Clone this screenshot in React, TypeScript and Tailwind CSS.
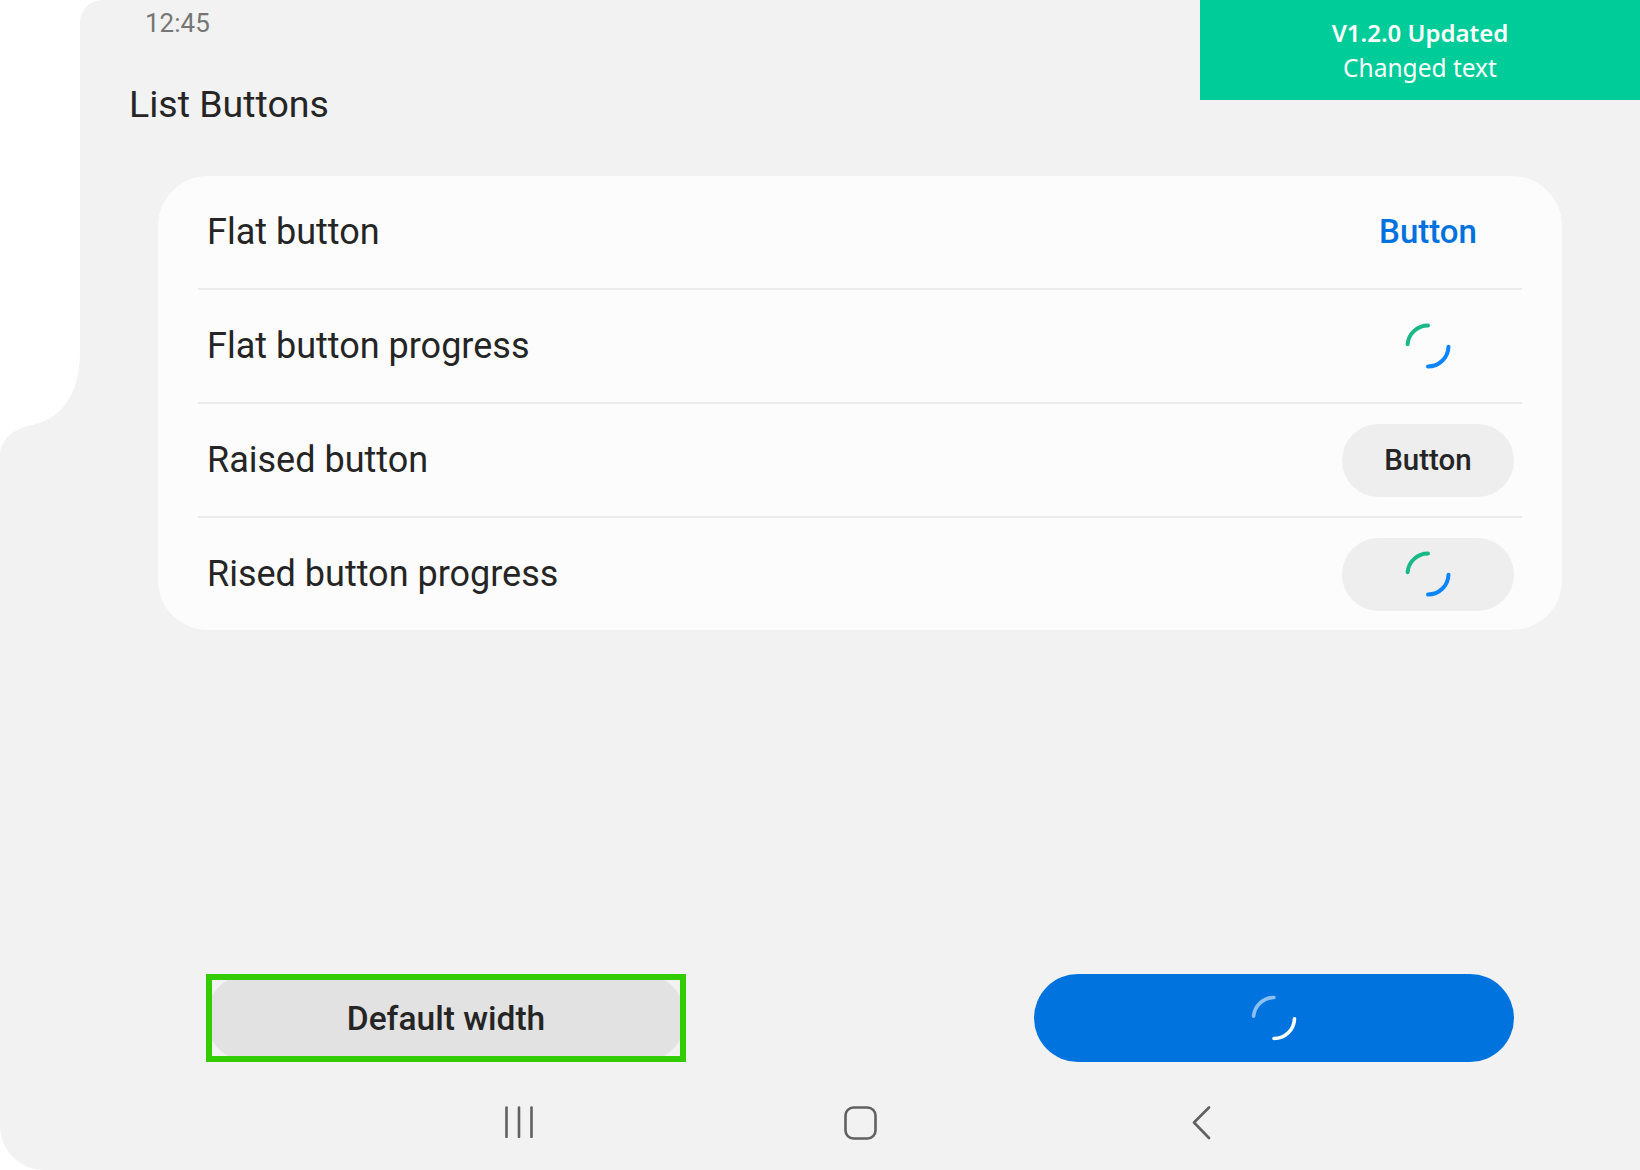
import React from "react";

function Spinner({ light = false }: { light?: boolean }) {
  const first = light ? "#ffffff" : "#19b888";
  const second = light ? "#ffffff" : "#0a84ff";
  return (
    <svg width="48" height="48" viewBox="0 0 48 48" fill="none">
      <path
        d="M3.6 22.2 A20.5 20.5 0 0 1 24 3.5"
        stroke={first}
        strokeOpacity={light ? 0.55 : 1}
        strokeWidth={light ? 3.6 : 4}
        strokeLinecap="round"
      />
      <path
        d="M44.5 24.7 A20.5 20.5 0 0 1 24 44.5"
        stroke={second}
        strokeWidth={light ? 3.6 : 4}
        strokeLinecap="round"
      />
    </svg>
  );
}

function Row({ label, children, last = false }: { label: string; children: React.ReactNode; last?: boolean }) {
  return (
    <div className={`mx-[40px] ${last ? "" : "border-b-2 border-[#ebebeb]"}`}>
      <div className="flex h-[112px] items-center justify-between pl-[9px] pr-[8px]">
        <span className="text-[36px] text-[#252525]">{label}</span>
        <div className="flex w-[172px] justify-center">{children}</div>
      </div>
    </div>
  );
}

export default function App() {
  return (
    <div
      className="relative h-[1170px] w-[1640px] overflow-hidden bg-white"
      style={{ fontFamily: "Roboto, 'Liberation Sans', sans-serif" }}
    >
      <div className="flex h-full flex-col rounded-bl-[44px] bg-[#f2f2f2]">
        {/* status bar */}
        <div className="flex h-[46px] items-center pl-[145px] text-[26px] text-[#767676]">12:45</div>

        {/* title */}
        <div className="flex h-[116px] items-center pl-[129px] text-[37.5px] text-[#252525]">List Buttons</div>

        {/* card */}
        <div className="ml-[158px] mt-[14px] w-[1404px] rounded-[50px] bg-[#fcfcfc]">
          <Row label="Flat button">
            <span className="text-[33px] font-medium text-[#0072de]">Button</span>
          </Row>
          <Row label="Flat button progress">
            <Spinner />
          </Row>
          <Row label="Raised button">
            <button className="flex h-[73px] w-[172px] items-center justify-center rounded-full bg-[#eeeeee] text-[29.5px] font-medium text-[#252525]">
              Button
            </button>
          </Row>
          <Row label="Rised button progress" last>
            <div className="flex h-[73px] w-[172px] items-center justify-center rounded-full bg-[#eeeeee]">
              <Spinner />
            </div>
          </Row>
        </div>

        <div className="flex-1" />

        {/* bottom buttons */}
        <div className="ml-[206px] flex gap-[348px]">
          <div className="relative h-[88px] w-[480px]">
            <button className="flex h-full w-full items-center justify-center rounded-[44px] bg-[#e2e2e2] pt-[2px] text-[33.5px] font-medium text-[#252525]">
              Default width
            </button>
            <div className="pointer-events-none absolute inset-0 border-[6px] border-[#33cc00]" />
          </div>
          <button className="flex h-[88px] w-[480px] items-center justify-center rounded-full bg-[#0073de]">
            <Spinner light />
          </button>
        </div>

        {/* navigation bar */}
        <div className="ml-[459px] flex h-[108px] gap-[221px] pt-[44px]">
          <div className="flex w-[120px] justify-center">
            <svg width="30" height="32" viewBox="0 0 30 32" fill="none" stroke="#616161" strokeWidth="2.6" strokeLinecap="round">
              <path d="M2.5 1.5V31" />
              <path d="M15 1.5V31" />
              <path d="M27.5 1.5V31" />
            </svg>
          </div>
          <div className="flex w-[120px] justify-center">
            <svg width="33" height="34" viewBox="0 0 33 34" fill="none" stroke="#616161" strokeWidth="2.6">
              <rect x="1.5" y="1.5" width="30" height="31" rx="8" />
            </svg>
          </div>
          <div className="flex w-[120px] justify-center">
            <svg width="20" height="34" viewBox="0 0 20 34" fill="none" stroke="#616161" strokeWidth="2.6" strokeLinecap="round" strokeLinejoin="round">
              <path d="M18 1.5L3 16.5L18 32" />
            </svg>
          </div>
        </div>
      </div>

      {/* device frame notch */}
      <svg className="pointer-events-none absolute left-0 top-0" width="104" height="460" viewBox="0 0 104 460">
        <path
          d="M0 0 H102 A22 22 0 0 0 80 22 V350 C80 398 60 420 28 426 C12 430 0 440 0 456 Z"
          fill="#ffffff"
        />
      </svg>

      {/* update toast */}
      <div
        className="absolute right-0 top-0 flex h-[100px] w-[440px] flex-col items-center bg-[#00cc9a] pt-[15px] text-white"
        style={{ fontFamily: "'Noto Sans', 'Open Sans', sans-serif" }}
      >
        <span className="text-[24px] font-semibold leading-[35px]">V1.2.0 Updated</span>
        <span className="text-[24.5px] leading-[35px]">Changed text</span>
      </div>
    </div>
  );
}
